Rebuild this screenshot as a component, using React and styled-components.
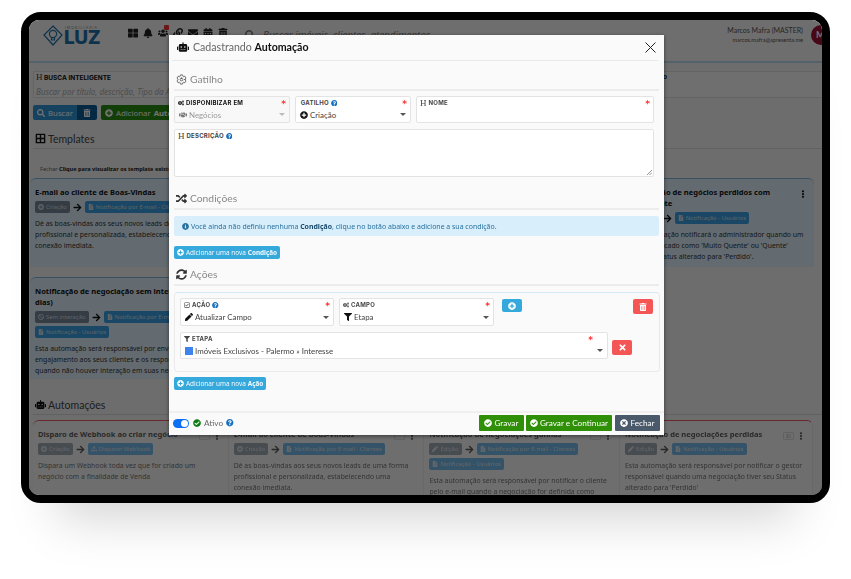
import React from "react";
import styled, { createGlobalStyle } from "styled-components";
import {
  FaRobot, FaRandom, FaSyncAlt, FaThLarge, FaBell, FaUsers, FaLink, FaEnvelope, FaCalendarAlt, FaTrashAlt, FaBorderAll,
  FaHandshake, FaPlusCircle, FaQuestionCircle, FaPen, FaFilter, FaCheckCircle, FaTimesCircle, FaTimes, FaFileAlt,
  FaArrowRight, FaEllipsisV, FaSearch, FaCogs, FaRegCheckSquare, FaInfoCircle, FaBan, FaSitemap,
} from "react-icons/fa";
import { IoSettingsOutline } from "react-icons/io5";

const Global = createGlobalStyle`
  html, body { margin: 0; padding: 0; background: #fff; }
  body { font-family: "Noto Sans", sans-serif; width: 851px; height: 579px; overflow: hidden; }
  * { box-sizing: border-box; }
`;

const Page = styled.div`padding: 12px 21px;`;
const Frame = styled.div`
  position: relative; width: 809px; height: 491px; border: 8px solid #000; border-radius: 20px;
  box-shadow: 0 52px 46px -36px rgba(0,0,0,.17); background: #000;
`;
const Screen = styled.div`
  width: 793px; height: 475px; overflow: hidden; background: #f1f1f1; border-radius: 10px;
  display: flex; flex-direction: column; color: #222;
`;
const Backdrop = styled.div`position: absolute; inset: 0; background: rgba(0,0,0,.55); border-radius: 10px;`;

const TopBar = styled.header`
  height: 43px; flex: none; display: flex; align-items: flex-start; padding: 2px 0 0 14px; background: #f4f4f4;
  border-bottom: 2px solid #b5d8ec; position: relative;
`;
const Logo = styled.div`display: flex; align-items: center; width: 70px; height: 28px; color: #1e6fa8; gap: 1px;`;
const LogoWords = styled.div`display: flex; flex-direction: column; line-height: 1;`;
const LogoSmall = styled.span`font: 3.5px "Inter", sans-serif; letter-spacing: 1.1px; color: #888; margin-left: 1px;`;
const LogoBig = styled.span`font: 800 19px/16px "Inter", sans-serif; letter-spacing: -.4px;`;
const TopIcons = styled.div`position: relative; display: flex; gap: 5px; margin: 6px 0 0 15px; font-size: 10px; color: #222; width: 117px; flex: none;`;
const Badge = styled.span`position: absolute; left: 36px; top: -3px; width: 5px; height: 5px; background: #e33; border-radius: 1px;`;
const TopSearch = styled.div`
  display: flex; align-items: center; gap: 8px; margin-top: 6px; font: italic 9.8px "Noto Sans", sans-serif; color: #777; flex: 1;
`;
const UserBox = styled.div`display: flex; flex-direction: column; align-items: flex-end; margin: 4px 8px 0 0; line-height: 1;`;
const UserName = styled.span`font: 7px "Lato", sans-serif; color: #555;`;
const UserMail = styled.span`font: 5.6px "Lato", sans-serif; color: #555; margin-top: 2px;`;
const Avatar = styled.div`
  width: 20px; height: 20px; border-radius: 50%; background: #9c1034; color: #fff; margin: 3px -9px 0 0; flex: none;
  font: 700 9px/20px "Lato", sans-serif; padding-left: 5px;
`;

const SearchPanel = styled.section`
  margin: 8px 0 0 4px; height: 27px; padding: 1px 0 0 2px; border: 1px solid #ddd; background: #f5f5f5; border-right: 0; flex: none; overflow: hidden;
`;
const SearchLabel = styled.div`display: flex; justify-content: space-between; width: 631px; font: 700 6.5px "Inter", sans-serif; color: #111;`;
const Placeholder = styled.div`font: italic 8px "Noto Sans", sans-serif; color: #aaa; margin-top: 4px; white-space: nowrap;`;
const ActionRow = styled.div`display: flex; margin: 7px 0 0 4px; gap: 4px; flex: none;`;
const BgGroup = styled.div`display: flex;`;
const BgBtn = styled.div`
  height: 15px; padding: 0 ${p => p.$px || 4}px; display: flex; align-items: center; gap: 3px; font: 7.8px "Noto Sans", sans-serif; color: #fff;
  background: ${p => p.$bg}; border-radius: ${p => p.$r || "2px"};
`;
const SectionTitle = styled.div`
  margin: ${p => p.$m}; padding: 3px 0 1px 2px; height: 22px; display: flex; align-items: center; gap: 2px; font: 10.5px "Lato", sans-serif; color: #444;
  border-bottom: 1px solid #d8d8d8; flex: none;
  & > svg { color: #111; font-size: 11px; }
`;
const HintLine = styled.div`margin: 16px 0 0 11px; font: 5.6px/9px "Noto Sans", sans-serif; color: #666; flex: none; height: 9px; b { color: #222; }`;
const CardGrid = styled.div`
  display: grid; grid-template-columns: repeat(4, ${p => p.$cw || 195.7}px); margin-left: ${p => p.$ml}; flex: none; margin-top: ${p => p.$mt};
  opacity: ${p => p.$o || 1};
`;
const Card = styled.article`
  position: relative; height: ${p => p.$h}px; padding: 6px 5px 4px; background: ${p => p.$bg || "#f5f5f5"}; overflow: hidden;
  border-top: 1px solid ${p => p.$line || "#7fb2d6"}; border-radius: 6px 6px 0 0;
  border-right: ${p => (p.$sep ? "1px solid #e0e0e0" : "0")};
  margin-right: ${p => p.$mr || 0}px;
`;
const CardTitle = styled.h4`margin: 2px 0 3px 0; font: 700 7.55px/11px "Noto Sans", sans-serif; color: #111; white-space: pre-line;`;
const Tags = styled.div`display: flex; flex-wrap: wrap; gap: 3px 3px; align-items: center; margin-bottom: 5px;`;
const Tag = styled.span`
  height: 12px; padding: 0 3px; display: inline-flex; align-items: center; gap: 2px; font: 5.9px "Noto Sans", sans-serif; border-radius: 2px; white-space: nowrap;
  color: #cfdbe3; background: ${p => (p.$dark ? "#768597" : "#3a9ee0")};
  svg { font-size: 6px; }
`;
const Arrow = styled(FaArrowRight)`font-size: 9px; color: #111;`;
const CardText = styled.p`margin: 0; font: 6.85px/11px "Noto Sans", sans-serif; color: #333; white-space: pre;`;
const Kebab = styled(FaEllipsisV)`position: absolute; right: 7px; top: 11px; font-size: 8px; color: #222;`;
const Counter = styled.span`
  position: absolute; right: 18px; top: 11px; width: 11px; height: 8px; border: 1px solid #ccc; border-radius: 1px;
  font: 4.5px/6px "Noto Sans", sans-serif; text-align: center; color: #888;
`;

const Modal = styled.div`
  position: absolute; left: 140px; top: 15px; width: 495px; height: 400px; background: #fafafa;
  box-shadow: 0 1px 4px rgba(0,0,0,.5); display: flex; flex-direction: column; color: #333;
`;
const ModalHead = styled.div`
  height: 26px; margin: 0 6px 0 3px; padding: 0 0 1px 5px; display: flex; align-items: center; gap: 4px; border-bottom: 1px solid #e9e9e9;
  font: 10.6px "Lato", sans-serif; color: #666; flex: none;
  & > svg:first-child { font-size: 12px; color: #111; }
  b { color: #111; font-weight: 700; }
`;
const CloseIcon = styled.svg`margin: 1px 2px 0 auto; width: 11px; height: 11px; stroke: #222; stroke-width: 1; fill: none;`;
const Body = styled.div`flex: 1; padding: 0 5px; display: flex; flex-direction: column; min-height: 0;`;
const GroupTitle = styled.div`
  height: 22px; margin-top: ${p => p.$mt}px; padding: 0 0 0 2px; display: flex; align-items: center; gap: 3px; border-bottom: 2px solid #ececec;
  font: 10.3px "Lato", sans-serif; color: #888; flex: none;
  svg { font-size: 11px; color: #333; }
`;
const FieldRow = styled.div`display: flex; gap: 5px; margin-top: ${p => p.$mt}px; width: ${p => p.$w || 480}px; flex: none;`;
const Field = styled.div`
  position: relative; width: ${p => (p.$w ? `${p.$w}px` : "auto")}; flex: ${p => (p.$w ? "none" : 1)}; height: ${p => p.$h || 27}px;
  border: 1px solid #e3e3e3; border-radius: 2px; background: ${p => p.$bg || "#fff"}; padding: 2px 3px 0 3px;
`;
const FieldLabel = styled.div`
  display: flex; align-items: center; gap: 2px; font: 700 6px/8px "Inter", sans-serif; color: ${p => p.$c || "#444"}; letter-spacing: .25px;
  svg { font-size: 6px; }
`;
const Hglyph = styled.span`font: 9px/8px "Liberation Serif", serif; color: #444; letter-spacing: 0;`;
const Help = styled(FaQuestionCircle)`color: #1670c0; font-size: ${p => p.$s || 6.5}px !important;`;
const Required = styled.span`position: absolute; top: 3px; right: ${p => p.$r || 3}px; color: #f33; font: 700 9px/8px "DejaVu Sans", sans-serif;`;
const FieldValue = styled.div`
  display: flex; align-items: center; gap: 2px; margin-top: 3px; font: 7.9px/10px "Lato", sans-serif; color: ${p => p.$c || "#444"}; padding-left: 1px;
  svg { font-size: 8px; color: ${p => p.$ic || "#111"}; }
`;
const Caret = styled.span`
  position: absolute; right: 4px; bottom: 6px; border: 3px solid transparent; border-top-color: ${p => p.$c || "#555"}; border-bottom: 0;
`;
const Resize = styled.svg`position: absolute; right: 1px; bottom: 1px; width: 5px; height: 5px; stroke: #666; stroke-width: .7;`;
const Alert = styled.div`
  margin-top: 6px; width: 485px; height: 20px; background: #d9eefb; border-radius: 2px; display: flex; align-items: center; gap: 2px; padding-left: 8px;
  font: 6.95px "Noto Sans", sans-serif; color: #27709f; flex: none; b { color: #17496d; }
`;
const AddBtn = styled.button`
  align-self: flex-start; height: 13px; margin-top: ${p => p.$mt}px; padding: 0 3px; display: flex; align-items: center; gap: 2px; border: 0; border-radius: 2px;
  background: #35a8dc; color: #f4fbff; font: 6.4px "Noto Sans", sans-serif; white-space: nowrap; flex: none;
  b { font-weight: 700; } svg { font-size: 7px; }
`;
const ActionBox = styled.div`
  position: relative; margin-top: 6px; width: 486px; height: 80px; border: 1px solid #eaeaea; border-top-color: #d3e9f6; border-radius: 4px; padding: 5px 5px; flex: none;
`;
const Row = styled.div`display: flex; gap: ${p => p.$g || 5}px; align-items: flex-start; margin-top: ${p => p.$mt || 0}px;`;
const IconBtn = styled.button`
  width: 20px; height: ${p => p.$h}px; border: 0; border-radius: 2px; background: ${p => p.$bg}; color: #fff; display: flex; align-items: center; justify-content: center; padding: 0;
  margin: ${p => p.$m || 0}; font-size: ${p => p.$fs || 8}px; flex: none;
`;
const Footer = styled.div`
  height: 24px; border-top: 2px solid #f0f0f0; display: flex; align-items: center; padding: 0 4px 2px; gap: 3px; flex: none; font: 8.2px "Lato", sans-serif; color: #666;
`;
const Toggle = styled.span`
  width: 16px; height: 9px; border-radius: 5px; background: #0b6ef5; position: relative; flex: none; margin-right: 1px;
  &::after { content: ""; position: absolute; right: 1px; top: 1px; width: 7px; height: 7px; border-radius: 50%; background: #fff; }
`;
const FootActions = styled.div`margin-left: auto; display: flex; gap: 2px;`;
const FootBtn = styled.button`
  height: 16px; padding: 0 4px; display: flex; align-items: center; justify-content: center; gap: 2px; border: 0; border-radius: 1px; background: ${p => p.$bg}; color: #fff;
  font: 8.2px "Lato", sans-serif; white-space: nowrap; margin-left: ${p => p.$ml || 0}px; min-width: ${p => p.$w || 0}px; svg { font-size: 8px; }
`;

const F = ({ children }) => <FieldLabel>{children}</FieldLabel>;

export default function App() {
  return (
    <Page>
      <Global />
      <Frame>
        <Screen>
          <TopBar>
            <Logo>
              <svg width="20" height="22" viewBox="0 0 20 22" fill="none" stroke="#1e6fa8" strokeWidth="1.2">
                <path d="M10 1 L19 10 L10 20 L1 10 Z" />
                <circle cx="10" cy="9" r="3.6" />
                <path d="M8.5 13v2h3v-2" />
              </svg>
              <LogoWords><LogoSmall>IMOBILIARIA</LogoSmall><LogoBig>LUZ</LogoBig></LogoWords>
            </Logo>
            <TopIcons><FaThLarge /><FaBell /><FaUsers /><FaLink /><FaEnvelope /><FaCalendarAlt /><FaTrashAlt /><Badge /></TopIcons>
            <TopSearch><FaSearch size={10} /> Buscar imóveis, clientes, atendimentos</TopSearch>
            <UserBox><UserName>Marcos Mafra (MASTER)</UserName><UserMail>marcos.mafra@apresenta.me</UserMail></UserBox>
            <Avatar>M</Avatar>
          </TopBar>
          <SearchPanel>
            <SearchLabel><span><Hglyph>H</Hglyph> BUSCA INTELIGENTE</span><span>Tipo</span></SearchLabel>
            <Placeholder>Buscar por título, descrição, Tipo da Ação, Tipo de Gatilho, nome do usuário ou nome de quem fez a última alteração, cliente, imóvel, etapa, atendimento, responsável, status e...</Placeholder>
          </SearchPanel>
          <ActionRow>
            <BgGroup>
              <BgBtn $bg="#2f93d3" $r="2px 0 0 2px"><FaSearch size={8} /> Buscar</BgBtn>
              <BgBtn $bg="#0c5a94" $r="0 2px 2px 0" $px={6}><FaTrashAlt size={8} /></BgBtn>
            </BgGroup>
            <BgBtn $bg="#288a10"><FaPlusCircle size={8} /> Adicionar <b>Automação</b></BgBtn>
          </ActionRow>
          <SectionTitle $m="7px 0 0 4px"><FaBorderAll /> Templates</SectionTitle>
          <HintLine>Fechar <b>Clique para visualizar os template existentes</b></HintLine>
          <CardGrid $ml="1px" $mt="4px" $cw={197.5}>
            <Card $h={89} $bg="#dcedf8" $mr={5}>
              <CardTitle>E-mail ao cliente de Boas-Vindas</CardTitle>
              <Tags><Tag $dark><FaPlusCircle /> Criação</Tag><Arrow /><Tag><FaFileAlt /> Notificação por E-mail - Clientes</Tag></Tags>
              <CardText>{"Dê as boas-vindas aos seus novos leads de uma forma\nprofissional e personalizada, estabelecendo uma\nconexão imediata."}</CardText>
            </Card>
            <Card $h={89} $bg="#dcedf8" $mr={5} />
            <Card $h={89} $bg="#dcedf8" $mr={5} />
            <Card $h={89} $bg="#dcedf8" $mr={6}>
              <Kebab />
              <CardTitle>{"Notificação de negócios perdidos com\nlead quente"}</CardTitle>
              <Tags><Tag $dark><FaPen /> Edição</Tag><Arrow /><Tag><FaFileAlt /> Notificação - Usuários</Tag></Tags>
              <CardText>{"Esta automação notificará o administrador quando um\nlead classificado como 'Muito Quente' ou 'Quente'\ntiver seu Status alterado para 'Perdido'."}</CardText>
            </Card>
          </CardGrid>
          <CardGrid $ml="1px" $mt="10px">
            <Card $h={102} $bg="#dcedf8" $mr={5}>
              <CardTitle>{"Notificação de negociação sem interação (30\ndias)"}</CardTitle>
              <Tags><Tag $dark><FaBan /> Sem interação</Tag><Arrow /><Tag><FaFileAlt /> Notificação por E-mail - Clientes</Tag><Tag><FaFileAlt /> Notificação - Usuários</Tag></Tags>
              <CardText>{"Esta automação será responsável por enviar um\nengajamento aos seus clientes e os responsáveis\nquando não houver interação em suas negociações"}</CardText>
            </Card>
          </CardGrid>
          <SectionTitle $m="14px 0 0 4px"><FaRobot /> Automações</SectionTitle>
          <CardGrid $ml="4px" $mt="5px" $o=".68">
            <Card $h={80} $line="#d12" $sep>
              <Counter /><Kebab />
              <CardTitle>Disparo de Webhook ao criar negócio</CardTitle>
              <Tags><Tag $dark><FaPlusCircle /> Criação</Tag><Arrow /><Tag><FaSitemap /> Disparar Webhook</Tag></Tags>
              <CardText>{"Dispara um Webhook toda vez que for criado um\nnegócio com a finalidade de Venda"}</CardText>
            </Card>
            <Card $h={80} $line="#d12" $sep>
              <Counter /><Kebab />
              <CardTitle>E-mail ao cliente de Boas-Vindas</CardTitle>
              <Tags><Tag $dark><FaPlusCircle /> Criação</Tag><Arrow /><Tag><FaFileAlt /> Notificação por E-mail - Clientes</Tag></Tags>
              <CardText>{"Dê as boas-vindas aos seus novos leads de uma forma\nprofissional e personalizada, estabelecendo uma\nconexão imediata."}</CardText>
            </Card>
            <Card $h={80} $line="#d12" $sep>
              <Counter /><Kebab />
              <CardTitle>Notificação de negociações ganhas</CardTitle>
              <Tags><Tag $dark><FaPen /> Edição</Tag><Arrow /><Tag><FaFileAlt /> Notificação por E-mail - Clientes</Tag><Tag><FaFileAlt /> Notificação - Usuários</Tag></Tags>
              <CardText>{"Esta automação será responsável por notificar o cliente\npelo e-mail quando a negociação for definida como"}</CardText>
            </Card>
            <Card $h={80} $line="#d12" $sep $mr={3}>
              <Counter>20</Counter><Kebab />
              <CardTitle>Notificação de negociações perdidas</CardTitle>
              <Tags><Tag $dark><FaPen /> Edição</Tag><Arrow /><Tag><FaFileAlt /> Notificação - Usuários</Tag></Tags>
              <CardText>{"Esta automação será responsável por notificar o gestor\nresponsável quando uma negociação tiver seu Status\nalterado para 'Perdido'"}</CardText>
            </Card>
          </CardGrid>
        </Screen>
        <Backdrop />
        <Modal>
          <ModalHead>
            <FaRobot /> <span>Cadastrando <b>Automação</b></span>
            <CloseIcon viewBox="0 0 11 11"><path d="M.5.5l10 10M10.5.5l-10 10" /></CloseIcon>
          </ModalHead>
          <Body>
            <GroupTitle $mt={8}><IoSettingsOutline /> Gatilho</GroupTitle>
            <FieldRow $mt={5}>
              <Field $w={116} $bg="#f8f8f8">
                <FieldLabel $c="#111"><FaCogs /> DISPONIBIZAR EM</FieldLabel><Required>*</Required>
                <FieldValue $c="#999" $ic="#777"><FaHandshake /> Negócios</FieldValue><Caret $c="#bbb" />
              </Field>
              <Field $w={116}>
                <F>&nbsp;GATILHO <Help /></F><Required>*</Required>
                <FieldValue><FaPlusCircle /> Criação</FieldValue><Caret />
              </Field>
              <Field>
                <F><Hglyph>H</Hglyph> NOME</F><Required>*</Required>
              </Field>
            </FieldRow>
            <FieldRow $mt={6}>
              <Field $h={48}>
                <F><Hglyph>H</Hglyph> DESCRIÇÃO <Help /></F>
                <Resize viewBox="0 0 5 5"><path d="M0 5L5 0M2.5 5L5 2.5" /></Resize>
              </Field>
            </FieldRow>
            <GroupTitle $mt={11}><FaRandom /> Condições</GroupTitle>
            <Alert><FaInfoCircle size={7} /> <span>Você ainda não definiu nenhuma <b>Condição</b>, clique no botão abaixo e adicione a sua condição.</span></Alert>
            <AddBtn $mt={10}><FaPlusCircle /> Adicionar uma nova <b>Condição</b></AddBtn>
            <GroupTitle $mt={5}><FaSyncAlt /> Ações</GroupTitle>
            <ActionBox>
              <Row>
                <Field $w={154} $h={28}>
                  <F><FaRegCheckSquare /> AÇÃO <Help /></F><Required>*</Required>
                  <FieldValue><FaPen /> Atualizar Campo</FieldValue><Caret />
                </Field>
                <Field $w={155} $h={28}>
                  <F><FaCogs /> CAMPO</F><Required>*</Required>
                  <FieldValue><FaFilter /> Etapa</FieldValue><Caret />
                </Field>
                <IconBtn $h={13} $bg="#35a8dc" $m="1px 0 0 3px"><FaPlusCircle /></IconBtn>
                <IconBtn $h={15} $bg="#f45656" $m="1px 0 0 106px"><FaTrashAlt /></IconBtn>
              </Row>
              <Row $mt={6} $g={4}>
                <Field $w={428} $h={27}>
                  <F><FaFilter /> ETAPA</F><Required $r={14}>*</Required>
                  <FieldValue><svg width="8" height="8"><rect width="8" height="8" fill="#3f82ee" /></svg> Imóveis Exclusivos - Palermo » Interesse</FieldValue><Caret />
                </Field>
                <IconBtn $h={15} $bg="#f45656" $fs={9} $m="8px 0 0 0"><FaTimes /></IconBtn>
              </Row>
            </ActionBox>
            <AddBtn $mt={5}><FaPlusCircle /> Adicionar uma nova <b>Ação</b></AddBtn>
          </Body>
          <Footer>
            <Toggle /><FaCheckCircle color="#0a7d12" size={8} /> Ativo <Help $s={7.5} />
            <FootActions>
              <FootBtn $bg="#2f8f06" $w={45}><FaCheckCircle /> Gravar</FootBtn>
              <FootBtn $bg="#2f8f06" $w={86}><FaCheckCircle /> Gravar e Continuar</FootBtn>
              <FootBtn $bg="#4a5a6a" $ml={1} $w={45}><FaTimesCircle /> Fechar</FootBtn>
            </FootActions>
          </Footer>
        </Modal>
      </Frame>
    </Page>
  );
}
